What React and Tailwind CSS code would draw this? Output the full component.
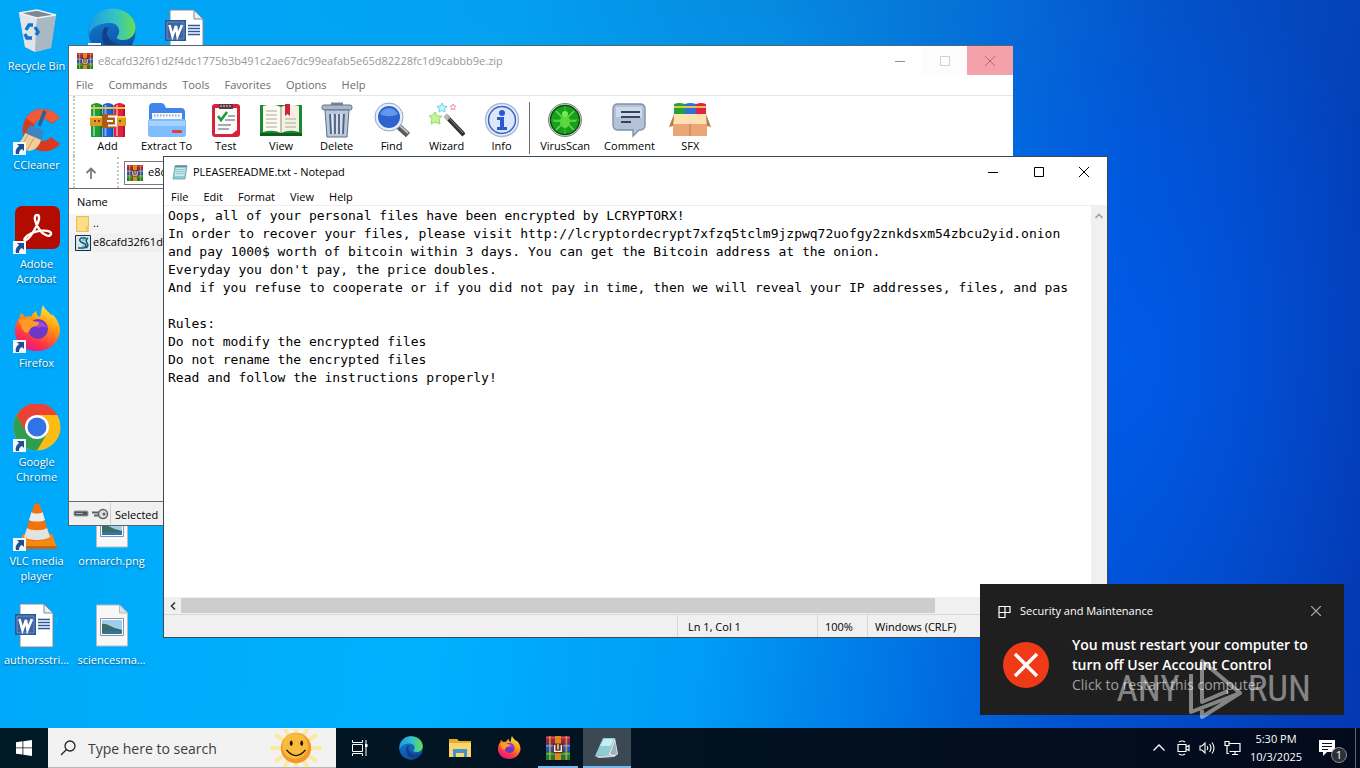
import React, { useState } from "react";

const ARCHIVE =
  "e8cafd32f61d2f4dc1775b3b491c2ae67dc99eafab5e65d82228fc1d9cabbb9e.zip";

const NOTE = `Oops, all of your personal files have been encrypted by LCRYPTORX!
In order to recover your files, please visit http://lcryptordecrypt7xfzq5tclm9jzpwq72uofgy2znkdsxm54zbcu2yid.onion
and pay 1000$ worth of bitcoin within 3 days. You can get the Bitcoin address at the onion.
Everyday you don't pay, the price doubles.
And if you refuse to cooperate or if you did not pay in time, then we will reveal your IP addresses, files, and pas

Rules:
Do not modify the encrypted files
Do not rename the encrypted files
Read and follow the instructions properly!`;

/* ---------- desktop icons ---------- */

const RecycleBin = () => (
  <svg viewBox="0 0 48 48" className="size-12">
    <path d="M6 5 43 7 38 40 22 44 12 39Z" fill="#b9c6cf" />
    <path d="M6 5 24 10 22 44 12 39Z" fill="#dfe5e9" />
    <path d="M24 10 43 7 38 40 22 44Z" fill="#a9b8c2" />
    <path d="M6 5 24 2 43 7 24 10Z" fill="#7d8a92" stroke="#eef2f4" strokeWidth="1.4" />
    <g fill="none" stroke="#1573c8" strokeWidth="3.4">
      <path d="M13 22l3-5h4" />
      <path d="M22 19l3 5-2 3" />
      <path d="M19 30h-5l-2-4" />
    </g>
  </svg>
);

const Edge = ({ className }) => (
  <svg viewBox="0 0 48 48" className={className}>
    <defs>
      <linearGradient id="edgeA" x1="0" y1="0.3" x2="1" y2="0.3">
        <stop offset="0" stopColor="#1b9de2" />
        <stop offset="0.55" stopColor="#35c1c8" />
        <stop offset="1" stopColor="#66dd55" />
      </linearGradient>
      <linearGradient id="edgeB" x1="0" y1="0" x2="0.3" y2="1">
        <stop offset="0" stopColor="#1488d8" />
        <stop offset="1" stopColor="#0c4fa5" />
      </linearGradient>
    </defs>
    <circle cx="24" cy="24" r="23.5" fill="url(#edgeB)" />
    <path d="M1 22C2 9 12 .5 24 .5 38 .5 47.500 10 47.500 20c0 8-6 12-12 12-6 0-8-2-6-4 4-5 1-13-8-13C11 15 2 20 1 28Z" fill="url(#edgeA)" />
    <path d="M17 19c-6 8-2 22 10 26 7 0 14-4 18-10-6 3-14 3-20-1-6-4-8-10-4-14Z" fill="#123f86" />
  </svg>
);

const WordDoc = () => (
  <svg viewBox="0 0 48 48" className="size-12">
    <path d="M7 2h24l9 9v34H7Z" fill="#fff" stroke="#7a8a99" strokeWidth="1" />
    <path d="M31 2v9h9Z" fill="#e8eef4" stroke="#7a8a99" strokeWidth="1" />
    <g stroke="#2b579a" strokeWidth="1.300">
      <path d="M25 17.500h12M25 20.500h12M25 23.500h12M25 26.500h12" />
    </g>
    <path d="M2 12h21v21H2Z" fill="#2b579a" />
    <path d="M4 14h17v17H4Z" fill="#fff" fillOpacity="0.080" stroke="#8fb0de" strokeWidth="0.600" />
    <path d="m6.500 17 3 11 3.500-10 1.500 10L19 17" fill="none" stroke="#fff" strokeWidth="2.600" />
  </svg>
);

const PngDoc = () => (
  <svg viewBox="0 0 48 48" className="size-12">
    <path d="M8.500 3h23l8 8v33h-31Z" fill="#f7f7f7" stroke="#b3bcc2" />
    <path d="M31.500 3v8h8Z" fill="#dbe2e6" stroke="#b3bcc2" />
    <path d="M12.500 16.500h23v17h-23Z" fill="#fff" stroke="#8696a3" />
    <path d="M14 18h20v14H14Z" fill="#9fcdf0" />
    <path d="M14 22c6-1 9 4 20 6v2H14Z" fill="#3d6b62" />
    <path d="M14 29h20v3H14Z" fill="#2d75a8" />
  </svg>
);

const CCleaner = () => (
  <svg viewBox="0 0 48 48" className="size-12">
    <path d="M47 11C38-1 20-1 13 11c-8 14-1 30 15 33 7 1 14-1 19-7l-9-7c-5 6-13 5-16-1-4-9 1-17 8-17 3 0 6 2 8 5Z" fill="#d8391f" />
    <path d="M47 11C38-1 20-1 13 11l8 6c4-6 13-7 17-1Z" fill="#ee5a3a" />
    <path d="M32 4 26 19" stroke="#2c5f94" strokeWidth="3.500" />
    <path d="m17 18 14 6-3 9-16-7Z" fill="#3f82c0" />
    <path d="M12 26 28 33c-2 7-6 10-12 11L1 39c5-2 9-7 11-13Z" fill="#f0cf9a" />
    <path d="m15 28-7 12M21 31l-7 12" stroke="#c89c5e" />
  </svg>
);

const Acrobat = () => (
  <svg viewBox="0 0 48 48" className="size-12">
    <rect x="2" y="0" width="45" height="43" rx="7" fill="#b30b00" />
    <path d="M24 9c-4 0-2 8 2 14 4 6 11 9 12 5 1-5-14-4-21 0-6 3-7 7-4 6 5-2 14-19 13-23 0-1-1-2-2-2Z" fill="none" stroke="#fff" strokeWidth="2.400" />
  </svg>
);

const Firefox = ({ className }) => (
  <svg viewBox="0 0 48 48" className={className}>
    <defs>
      <linearGradient id="ffA" x1="0.8" y1="0" x2="0.3" y2="1">
        <stop offset="0" stopColor="#fff14a" />
        <stop offset="0.4" stopColor="#ff980e" />
        <stop offset="0.75" stopColor="#ff3647" />
        <stop offset="1" stopColor="#e31587" />
      </linearGradient>
    </defs>
    <path d="M30 0c2 5 6 7 9 11 0-1 0-2-1-3 6 5 9 12 9 18-1 12-11 20-23 20S2 38 2 26c0-6 2-11 5-14 0-1 0-2 1-4 2 1 3 3 4 4 2-1 4-1 6 0 1-3 3-5 6-6-1 4 1 5 3 6 1-3 1-8 3-12Z" fill="url(#ffA)" />
    <circle cx="25" cy="24" r="10" fill="#6f37c8" />
    <path d="M17 19c5-5 15-3 17 4-3-2-6-2-8 0Z" fill="#a04be0" />
    <path d="M6 15c5-2 10-2 14 1 2 1 5 0 6 2 0 3-5 3-8 5-2 2-1 4-4 5-3 0-6-5-8-13Z" fill="#ff9a28" />
  </svg>
);

const Chrome = () => (
  <svg viewBox="0 0 48 48" className="size-12">
    <circle cx="24" cy="23" r="23.500" fill="#fbbc16" />
    <g transform="translate(0 -1)">
      <path d="M24 12h20.400A23.500 23.500 0 0 0 3.600 12.300L13 30Z" fill="#ea4335" />
      <path d="M3.600 12.300A23.500 23.500 0 0 0 24 47.500L34.400 30 24 24 13.600 30Z" fill="#2f9e4f" />
      <circle cx="24" cy="24" r="12" fill="#fff" />
      <circle cx="24" cy="24" r="9.500" fill="#2f73e6" />
    </g>
  </svg>
);

const Vlc = () => (
  <svg viewBox="0 0 48 48" className="size-12">
    <path d="M10 31h29l5 14H4Z" fill="#f58a12" />
    <path d="M4 43h40v3H4Z" fill="#c8650a" />
    <path d="M21 2c1-2 5-2 6 0l10 33c-3 4-23 4-26 0Z" fill="#f3730a" />
    <path d="m18.500 9-2.500 8c3 2 13 2 16 0l-2.500-8c-2 2-9 2-11 0Z" fill="#ececec" />
    <path d="m14 25-3 9c4 4 22 4 26 0l-3-9c-4 3-16 3-20 0Z" fill="#e2e2e2" />
  </svg>
);

const ShortcutArrow = () => (
  <svg viewBox="0 0 13 13" className="absolute bottom-0 left-0 size-[13px]">
    <path d="M0 0h13v13H0Z" fill="#f4f8fb" />
    <path d="M4 2h7v7L9 7C7 8 6 9 6 12H3C2 8 4 6 6 4Z" fill="#1d4f91" />
  </svg>
);

/* ---------- archive icons ---------- */

const RarBooks = ({ className }) => (
  <svg viewBox="0 0 16 16" className={className}>
    <path d="M0 0h16v5.200H0Z" fill="#a3203f" />
    <path d="M0 5.200h16v5.300H0Z" fill="#2c4fc0" />
    <path d="M0 10.500h16V16H0Z" fill="#1f7a34" />
    <path d="M0 .8h16v.8H0Z" fill="#d95a70" />
    <path d="M0 6.200h16v.8H0Z" fill="#6fa8ee" />
    <path d="M0 11.500h16v.8H0Z" fill="#5fc45a" />
    <path d="M2 0h1.200v16H2Zm11 0h1.200v16H13Z" fill="#d9b43c" fillOpacity="0.700" />
    <path d="M6 0h4v16H6Z" fill="#d98a1a" />
    <path d="M4.500 5h7v6.500h-7Z" fill="#6b2d16" />
    <path d="M5.800 6v4.200h4.400V6M8 5.500V9" fill="none" stroke="#f4f4f4" strokeWidth="0.900" />
  </svg>
);

const AddIcon = () => (
  <svg viewBox="0 0 36 36" className="size-9">
    {["#1d9c3c", "#1d63d8", "#e0203e"].map((color, i) => (
      <g key={color} transform={`translate(${1 + i * 11.5} 1)`}>
        <path d="M0 2q5.500-4 11 0v32H0Z" fill={color} />
        <path d="M2 2h2v31H2Z" fill="#fff" fillOpacity="0.450" />
        <path d="M9 2h2v32H9Z" fill="#000" fillOpacity="0.220" />
        <path d="M0 4h11v2H0Z" fill="#f0c23a" />
      </g>
    ))}
    <path d="M0 14h36v10H0Z" fill="#e09a1e" />
    <path d="M0 14h36v2H0Z" fill="#f8cf62" />
    <path d="M12 12h14v14H12Z" fill="#a85c18" />
    <path d="M18 14.500h8v9h-8M17 19h6" fill="none" stroke="#f5f5f5" strokeWidth="2.200" />
    <path d="M4 19h2M8 19h2M29 19h2" stroke="#7a4210" strokeWidth="2" />
  </svg>
);

const ExtractIcon = () => (
  <svg viewBox="0 0 38 36" className="h-9 w-[38px]">
    <path d="M1 5q0-4 4-4h8q3 0 4 3l1 2h15q4 0 4 4v20q0 4-4 4H5q-4 0-4-4Z" fill="#3f85ea" />
    <path d="M4 11h30v12H4Z" fill="#f5f8fb" />
    <path d="M6 13.500h26" stroke="#9bacc0" strokeWidth="2" strokeDasharray="1.500 1.500" />
    <path d="M0 20q0-3 3-3h32q3 0 3 3v12q0 3-3 3H3q-3 0-3-3Z" fill="#7ebcfb" />
    <path d="M1 19h36v5H1Z" fill="#a6d3ff" />
    <rect x="24" y="28" width="10" height="3" rx="1" fill="#e0403a" />
  </svg>
);

const TestIcon = () => (
  <svg viewBox="0 0 30 36" className="h-9 w-[30px]">
    <rect x="1" y="2" width="28" height="33" rx="3" fill="#d62338" />
    <path d="M4 6h22v22l-5 4H4Z" fill="#fbfbfb" />
    <path d="M8 2h14v5H8Z" fill="#5d3a40" />
    <path d="M9 4h12" stroke="#f1d5d5" strokeDasharray="2 1" />
    <path d="m7 14 3 4 6-8" fill="none" stroke="#1f9a3c" strokeWidth="2.600" />
    <path d="M17 14h7M14 18h10M7 23h13M7 27h11" stroke="#8a8f96" strokeWidth="1.400" />
  </svg>
);

const ViewIcon = () => (
  <svg viewBox="0 0 44 36" className="h-9 w-11">
    <path d="M1 3h42v30H1Z" fill="#1a8a33" />
    <path d="M1 31h42v3H1Z" fill="#0d5f20" />
    <path d="M4 4q10-3 18 1v26q-8-4-18-1Z" fill="#fdfbf2" />
    <path d="M40 4q-10-3-18 1v26q8-4 18-1Z" fill="#f4f0e3" />
    <path d="M22 5v26" stroke="#8f8a78" />
    <path d="M7 9h11M7 13h11M7 17h11M7 21h11M7 25h11M26 17h11M26 21h11M26 25h11" stroke="#a9a99b" />
    <path d="M26 2h5v12l-2.500-2-2.500 2Z" fill="#cf2335" />
  </svg>
);

const DeleteIcon = () => (
  <svg viewBox="0 0 32 36" className="h-9 w-8">
    <path d="M10 2h12" stroke="#78869a" strokeWidth="3" />
    <rect x="1" y="3" width="30" height="5" rx="2" fill="#a9b7c9" stroke="#65748a" />
    <path d="M4 8h24l-2 27H6Z" fill="#b9c8da" stroke="#5f7089" />
    <path d="m9 12 1 20M14 12v20M18 12v20M23 12l-1 20" stroke="#4f6280" strokeWidth="1.800" />
    <path d="m11 12 1 20M16 12v20M20 12v20" stroke="#eef4fa" strokeWidth="1" />
  </svg>
);

const FindIcon = () => (
  <svg viewBox="0 0 36 36" className="size-9">
    <path d="m24 24 10 9" stroke="#5a5a5e" strokeWidth="6" />
    <path d="m25 23 9 8" stroke="#b9bdc4" strokeWidth="2" />
    <circle cx="15" cy="15" r="14" fill="#e7eef8" stroke="#8ea6cf" />
    <circle cx="15" cy="15" r="11" fill="#2d62cf" />
    <path d="M6 12c4-8 14-8 18 0-5 3-13 3-18 0Z" fill="#6596ee" />
  </svg>
);

const WizardIcon = () => (
  <svg viewBox="0 0 36 36" className="size-9">
    <path d="m17 14 18 19" stroke="#2f2f33" strokeWidth="4.500" />
    <path d="m16 13 4 4" stroke="#b9b9bd" strokeWidth="4.500" />
    <path d="m19 15 15 16" stroke="#8b8b90" strokeWidth="1" />
    <path d="m6 10 2 4 5 0-3 3 1 5-5-2-4 2 1-5-3-3 4-1Z" fill="#c9f396" stroke="#8fdc66" />
    <path d="m13 1 1.500 3 3.500.5-2.500 2.500.5 3-3-1.500-3 1.500.5-3L8 4.500l3.500-.5Z" fill="#c4f4fb" stroke="#6cd3e8" />
    <path d="m24 2 1 2 2 .2-1.500 1.500.5 2-2-1-2 1 .5-2L21 4.200l2-.2Z" fill="#fff" stroke="#f3909c" />
  </svg>
);

const InfoIcon = () => (
  <svg viewBox="0 0 36 36" className="size-9">
    <circle cx="18" cy="18" r="16.500" fill="#e9f0fb" stroke="#a9b9d6" strokeWidth="1.500" />
    <circle cx="18" cy="18" r="13.500" fill="#dce7fa" stroke="#3865c4" strokeWidth="1.500" />
    <circle cx="18" cy="11" r="3" fill="#2b57d0" />
    <path d="M13 15h7v10h3v3H13v-3h3v-7h-3Z" fill="#2b57d0" />
  </svg>
);

const VirusIcon = () => (
  <svg viewBox="0 0 36 36" className="size-9">
    <circle cx="18" cy="18" r="16.500" fill="#d3dad3" stroke="#7b857b" />
    <circle cx="18" cy="18" r="14.500" fill="#18a01c" stroke="#0b4d10" strokeWidth="1.500" />
    <path d="M18 4v28M4 18h28" stroke="#3fc43a" />
    <path d="m9 9 6 6m12-6-6 6M7 19h6m16 0h-6M9 28l6-6m12 6-6-6" stroke="#62dc4c" strokeWidth="1.600" />
    <ellipse cx="18" cy="19.500" rx="5" ry="6.500" fill="#5ad83e" />
    <circle cx="18" cy="12" r="3" fill="#7ae858" />
  </svg>
);

const CommentIcon = () => (
  <svg viewBox="0 0 36 36" className="size-9">
    <path d="M7 2h22q5 0 5 5v16q0 5-5 5h-1l-6 6 0-6H7q-5 0-5-5V7q0-5 5-5Z" fill="#b3c2d8" stroke="#8190ab" strokeWidth="1.400" />
    <path d="M5 5h26v10H5Z" fill="#dae4f1" fillOpacity="0.700" />
    <path d="M10 10h19M10 15h19M10 20h10" stroke="#35455f" strokeWidth="1.800" />
  </svg>
);

const SfxIcon = () => (
  <svg viewBox="0 0 42 36" className="h-9 w-[42px]">
    <path d="M5 2q5-2 11 0v13H5Z" fill="#22a13c" />
    <path d="M16 2q5-2 11 0v13H16Z" fill="#2f6fd8" />
    <path d="M27 2q5-2 10 0v13H27Z" fill="#e02343" />
    <path d="M5 4h32v2H5Z" fill="#eac24a" />
    <path d="M5 12h32l4 11H1Z" fill="#c58a5c" />
    <path d="M5 12h32l1 10H4Z" fill="#fbe2b0" />
    <path d="M4 22h34v12H4Z" fill="#eca676" />
    <path d="M21 22v12" stroke="#c07a4a" />
    <path d="m5 13-5 12 4-1ZM37 13l5 12-4-1Z" fill="#b07c52" />
  </svg>
);

/* ---------- small icons ---------- */

const NotepadIcon = () => (
  <svg viewBox="0 0 16 16" className="size-4">
    <path d="M3 2h12l-2 13H1Z" fill="#8ccbd3" stroke="#5f9aa5" strokeWidth="0.700" />
    <path d="M4 4h9.500l-1.300 8H2.500Z" fill="#c5ebee" />
    <path d="M4 5.500h9M4 7.500h8.500M3.500 9.500h9" stroke="#7db9c4" strokeWidth="0.700" />
    <path d="M4 1v2M6 1v2M8 1v2M10 1v2M12 1v2M14 1v2" stroke="#4d5c61" strokeWidth="0.900" />
  </svg>
);

const NotepadTile = () => (
  <svg viewBox="0 0 24 24" className="size-6">
    <path d="M8 2h12L13 19 0 20Z" fill="#8fcdd6" />
    <path d="M9 3h10l-3 7H5Z" fill="#c6edf0" />
    <path d="m20 2 3 16-4 3-6-2Z" fill="#e2ecee" />
    <path d="m20 5 2 13-3 1-4-1Z" fill="#9fb4ba" />
    <path d="m0 20 13-1 6 2-15 1Z" fill="#cfd9da" />
  </svg>
);

const FolderTile = () => (
  <svg viewBox="0 0 24 24" className="size-6">
    <path d="M1 3h8l2 2h12v16H1Z" fill="#e8a92c" />
    <path d="M1 7h22v14H1Z" fill="#fbd66a" />
    <path d="M5 13h14v8h-3v-4H8v4H5Z" fill="#3f93d6" />
  </svg>
);

const Sun = () => (
  <svg viewBox="0 0 60 40" className="mr-2.5 ml-auto h-[38px] w-[60px] shrink-0">
    <g stroke="#fbe9a0" strokeWidth="4">
      <path d="M30 20V0M30 20v20M30 20H3M30 20h27M30 20 8 6M30 20 52 6M30 20 8 34M30 20l22 14M30 20 17-2M30 20 43-2M30 20 17 42M30 20l13 22" />
    </g>
    <circle cx="30" cy="20" r="16" fill="#f0982a" />
    <circle cx="29" cy="18" r="13.500" fill="#f8bb3e" />
    <ellipse cx="25" cy="15" rx="1.500" ry="3" fill="#1d1208" />
    <ellipse cx="36" cy="15" rx="1.500" ry="3" fill="#1d1208" />
    <path d="M20 22q10 12 20 0" fill="none" stroke="#1d1208" strokeWidth="1.500" />
  </svg>
);

const WinButtons = ({ faded }) => (
  <div className="ml-auto flex h-[29px]">
    <button aria-label="Minimize" className={faded ? "w-[45px] text-[#8c8c8c]" : "w-[46px]"}>
      <svg viewBox="0 0 10 10" className="mx-auto size-2.5">
        <path d="M0 5.500h10" stroke="currentColor" />
      </svg>
    </button>
    <button aria-label="Maximize" className={faded ? "w-[45px] bg-[#fcfcfc] text-[#cfcfcf]" : "w-[45px]"}>
      <svg viewBox="0 0 10 10" className="mx-auto size-2.5">
        <path d="M.5.500h9v9h-9Z" fill="none" stroke="currentColor" />
      </svg>
    </button>
    <button aria-label="Close" className={faded ? "w-[46px] bg-[#f4a1a9] text-[#a37278]" : "w-[46px]"}>
      <svg viewBox="0 0 10 10" className="mx-auto size-2.5">
        <path d="m0 0 10 10M10 0 0 10" stroke="currentColor" />
      </svg>
    </button>
  </div>
);

const desktopItems = [
  { label: "Recycle Bin", icon: <RecycleBin />, cell: "col-start-1 row-start-1" },
  { label: "CCleaner", icon: <CCleaner />, cell: "col-start-1 row-start-2", link: true },
  { label: "Adobe Acrobat", icon: <Acrobat />, cell: "col-start-1 row-start-3", link: true },
  { label: "Firefox", icon: <Firefox className="size-12" />, cell: "col-start-1 row-start-4", link: true },
  { label: "Google Chrome", icon: <Chrome />, cell: "col-start-1 row-start-5", link: true },
  { label: "VLC media player", icon: <Vlc />, cell: "col-start-1 row-start-6", link: true },
  { label: "authorsstri...", icon: <WordDoc />, cell: "col-start-1 row-start-7" },
  { label: "", icon: <Edge className="size-12" />, cell: "col-start-2 row-start-1", link: true },
  { label: "ormarch.png", icon: <PngDoc />, cell: "col-start-2 row-start-6" },
  { label: "sciencesma...", icon: <PngDoc />, cell: "col-start-2 row-start-7" },
  { label: "", icon: <WordDoc />, cell: "col-start-3 row-start-1" },
];

const tools = [
  { label: "Add", icon: <AddIcon /> },
  { label: "Extract To", icon: <ExtractIcon /> },
  { label: "Test", icon: <TestIcon /> },
  { label: "View", icon: <ViewIcon /> },
  { label: "Delete", icon: <DeleteIcon /> },
  { label: "Find", icon: <FindIcon /> },
  { label: "Wizard", icon: <WizardIcon /> },
  { label: "Info", icon: <InfoIcon /> },
];

const extraTools = [
  { label: "VirusScan", icon: <VirusIcon /> },
  { label: "Comment", icon: <CommentIcon /> },
  { label: "SFX", icon: <SfxIcon /> },
];

const ToolButton = ({ tool }) => (
  <button className="flex min-w-[55px] flex-col items-center px-1.5">
    {tool.icon}
    <span className="leading-4">{tool.label}</span>
  </button>
);

const Desktop = () => (
  <div className="grid grid-cols-[repeat(3,75px)] grid-rows-[repeat(7,99px)]">
    {desktopItems.map((item, index) => (
      <div key={index} className={`flex flex-col items-center pt-2 pr-0.5 ${item.cell}`}>
        <div className="relative">
          {item.icon}
          {item.link && <ShortcutArrow />}
        </div>
        <span className="mt-0.5 text-center leading-[15px] text-white [text-shadow:0_1px_2px_rgba(0,0,0,0.55)]">
          {item.label}
        </span>
      </div>
    ))}
  </div>
);

const WinRar = () => (
  <section className="absolute top-[45px] left-[68px] flex h-[481px] w-[945px] flex-col border border-r-0 border-[#4f6675] bg-white">
    <header className="flex h-[29px] shrink-0 items-center pl-2 text-[#999999]">
      <RarBooks className="size-4" />
      <span className="ml-[5px] pt-px">{ARCHIVE}</span>
      <WinButtons faded />
    </header>
    <nav className="flex h-[21px] shrink-0 items-center gap-[15px] border-b border-[#e6e6e6] pt-px pl-[7px] text-[#6d6d6d]">
      <button>File</button>
      <button>Commands</button>
      <button>Tools</button>
      <button>Favorites</button>
      <button>Options</button>
      <button>Help</button>
    </nav>
    <div className="ml-1 flex shrink-0 border-l-2 border-dotted border-[#c4c4c4] pt-1.5 pb-0.5 pl-[5px]">
      <div className="flex">
        {tools.map((tool) => (
          <ToolButton key={tool.label} tool={tool} />
        ))}
      </div>
      <div className="mr-1 w-px bg-[#6b6b6b]" />
      <div className="flex gap-0.5">
        {extraTools.map((tool) => (
          <ToolButton key={tool.label} tool={tool} />
        ))}
      </div>
    </div>
    <div className="ml-1 flex h-8 shrink-0 items-center border-l-2 border-dotted border-[#c4c4c4] pt-px">
      <button aria-label="Up one level" className="flex w-8 justify-center">
        <svg viewBox="0 0 12 12" className="size-3 text-[#7a7a7a]">
          <path d="M6 12V1.500M1.500 6 6 1.500 10.500 6" fill="none" stroke="currentColor" strokeWidth="1.800" />
        </svg>
      </button>
      <div className="ml-2.5 h-full border-l-2 border-dotted border-[#c4c4c4]" />
      <label className="mr-2 ml-[5px] flex h-6 grow items-center border border-[#7a7a7a] pl-0.5">
        <RarBooks className="size-4" />
        <input aria-label="Address" className="ml-[5px] grow outline-none" defaultValue={ARCHIVE} />
      </label>
    </div>
    <div className="grow border-t border-[#6b6b6b] bg-[#f5f5f5]">
      <table className="w-full text-left">
        <thead className="bg-white">
          <tr>
            <th className="h-[25px] pt-0.5 pl-2 font-normal">Name</th>
          </tr>
        </thead>
        <tbody>
          <tr>
            <td className="h-[19px] pl-1.5">
              <span className="flex items-center">
                <svg viewBox="0 0 16 16" className="size-4">
                  <path d="M1.500.500h12v15h-12Z" fill="#fbdd84" stroke="#e5bd52" />
                  <path d="M11 10h3v5h-3Z" fill="#f2c85c" />
                </svg>
                <span className="ml-0.5">..</span>
              </span>
            </td>
          </tr>
          <tr className="bg-[#f0f0f0]">
            <td className="h-[19px] pl-1.5">
              <span className="flex items-center">
                <svg viewBox="0 0 16 16" className="size-4">
                  <path d="M.5.500h15v15H.5Z" fill="#d7e4ea" stroke="#14324a" />
                  <path d="M11 3H6Q3.500 5 6 7l4 2q2 2-1 4H3M13 3q-3 2-1 5 2 3-1 5" fill="none" stroke="#0f5b75" strokeWidth="1.600" />
                  <path d="M7 5h4M7 11h2" stroke="#2fa8b8" strokeWidth="1.200" />
                </svg>
                <span className="ml-0.5">e8cafd32f61d2f4dc</span>
              </span>
            </td>
          </tr>
        </tbody>
      </table>
    </div>
    <footer className="flex h-6 shrink-0 items-center border-t border-[#6b6b6b] bg-[#f0f0f0]">
      <svg viewBox="0 0 36 12" className="ml-1 h-3 w-9 shrink-0">
        <rect x="1" y="3" width="14" height="5" rx="1" fill="#4d565c" stroke="#9aa3a8" />
        <path d="M3 5.500h7" stroke="#aab4b9" />
        <path d="M19 4.500h8M21 7.500h6" stroke="#5d6468" strokeWidth="2" />
        <circle cx="30" cy="6" r="4.500" fill="#dcdfe0" stroke="#5d6468" strokeWidth="1.500" />
        <circle cx="31" cy="6" r="1.500" fill="#5d6468" />
      </svg>
      <span className="ml-px border-l border-[#d0d0d0] pt-1 pl-1">Selected</span>
    </footer>
  </section>
);

const Notepad = () => {
  const [text, setText] = useState(NOTE);
  return (
    <section className="absolute top-[156px] left-[163px] flex h-[482px] w-[945px] flex-col border border-[#3c4a54] bg-white text-black">
      <header className="flex h-[30px] shrink-0 items-center pl-2">
        <NotepadIcon />
        <span className="ml-[5px]">PLEASEREADME.txt - Notepad</span>
        <WinButtons />
      </header>
      <nav className="flex h-[19px] shrink-0 items-center gap-[15px] border-b border-[#ededed] pt-0.5 pl-[7px]">
        <button>File</button>
        <button>Edit</button>
        <button>Format</button>
        <button>View</button>
        <button>Help</button>
      </nav>
      <div className="flex grow">
        <textarea
          aria-label="Text editor"
          wrap="off"
          spellCheck={false}
          value={text}
          onChange={(e) => setText(e.target.value)}
          className="grow resize-none overflow-hidden pt-px pl-1 font-['DejaVu_Sans_Mono',monospace] text-[13px] leading-[18px] outline-none"
        />
        <div className="flex w-4 flex-col items-center bg-[#f0f0f0] pt-[7px]">
          <svg viewBox="0 0 8 6" className="h-1.5 w-2">
            <path d="m.5 5 3.500-3.500L7.500 5" fill="none" stroke="#a3a3a3" strokeWidth="1.700" />
          </svg>
        </div>
      </div>
      <div className="flex h-[17px] shrink-0 items-center bg-[#f0f0f0]">
        <div className="flex w-[17px] justify-center">
          <svg viewBox="0 0 6 8" className="h-2 w-1.5">
            <path d="M5 .5 1.500 4 5 7.500" fill="none" stroke="#404040" strokeWidth="1.700" />
          </svg>
        </div>
        <div className="h-[15px] w-4/5 bg-[#cdcdcd]" />
      </div>
      <footer className="flex h-[23px] shrink-0 items-center justify-end border-t border-[#d7d7d7] bg-[#f0f0f0]">
        <span className="w-[140px] border-l border-[#d7d7d7] pt-px pl-2.5 leading-[21px]">Ln 1, Col 1</span>
        <span className="w-[50px] border-l border-[#d7d7d7] pt-px pl-[7px] leading-[21px]">100%</span>
        <span className="w-60 border-l border-[#d7d7d7] pt-px pl-[7px] leading-[21px]">Windows (CRLF)</span>
      </footer>
    </section>
  );
};

const Toast = () => (
  <aside className="absolute right-4 bottom-[13px] w-[364px] bg-[#1f1f1f] pt-[18px] pr-[23px] pb-5 pl-[18px] text-white">
    <div className="flex items-center">
      <svg viewBox="0 0 13 13" className="size-[13px]">
        <path d="M1 1.500h11v6H7v5H1ZM1 7.500h6M7 1v7" fill="none" stroke="#fff" strokeWidth="1.200" />
      </svg>
      <span className="ml-[9px] leading-[18px]">Security and Maintenance</span>
      <button aria-label="Dismiss" className="ml-auto">
        <svg viewBox="0 0 10 10" className="size-2.5">
          <path d="m0 0 10 10M10 0 0 10" stroke="#b0b0b0" strokeWidth="1.200" />
        </svg>
      </button>
    </div>
    <div className="mt-[15px] flex">
      <svg viewBox="0 0 46 46" className="mt-[7px] ml-[5px] size-[46px] shrink-0">
        <circle cx="23" cy="23" r="23" fill="#f03a17" />
        <path d="m12 12 22 22M34 12 12 34" stroke="#fff" strokeWidth="3.500" />
      </svg>
      <div className="ml-[23px] text-sm leading-5">
        <p className="font-semibold">
          You must restart your computer to
          <br />
          turn off User Account Control
        </p>
        <p className="text-[#a0a0a0]">Click to restart this computer</p>
      </div>
    </div>
  </aside>
);

const Watermark = () => (
  <div className="pointer-events-none absolute right-[49px] bottom-2 flex items-center font-['Liberation_Sans_Narrow','Roboto_Condensed','Roboto',sans-serif] text-[37px] leading-[62px] text-white opacity-45">
    <span>ANY</span>
    <svg viewBox="0 0 56 62" className="mr-1 ml-2 h-[62px] w-14">
      <path
        d="M3 16v38L52 35 14 3v41L40 33M14 52v7L52 35"
        fill="none"
        stroke="#fff"
        strokeWidth="4"
        strokeLinejoin="round"
      />
    </svg>
    <span>RUN</span>
  </div>
);

const Taskbar = () => (
  <footer className="flex h-10 shrink-0 bg-linear-to-r from-[#001a26] to-[#030a1c] text-white">
    <button aria-label="Start" className="flex w-12 items-center justify-center">
      <svg viewBox="0 0 16 16" className="size-4" fill="#fff">
        <path d="M0 2.200 6.500 1.300v6.200H0ZM7.300 1.200 16 0v7.500H7.300ZM0 8.300h6.500v6.300L0 13.700ZM7.300 8.300H16V16l-8.700-1.200Z" />
      </svg>
    </button>
    <label className="flex w-72 items-center border-b border-[#b8b8b8] bg-[#f2f2f2] pl-3">
      <svg viewBox="0 0 16 16" className="size-4 shrink-0">
        <path d="M6.500 9.500 1 15" stroke="#222" strokeWidth="1.300" />
        <circle cx="10" cy="6" r="5" fill="none" stroke="#222" strokeWidth="1.300" />
      </svg>
      <input
        aria-label="Search"
        placeholder="Type here to search"
        className="ml-3 w-[152px] pt-0.5 text-sm outline-none placeholder:text-[#3d3d3d]"
      />
      <Sun />
    </label>
    <div className="flex gap-px">
      <button aria-label="Task View" className="mr-0.5 flex w-12 items-center justify-center">
        <svg viewBox="0 0 16 16" className="size-4">
          <path d="M.5 4.500h10v7H.5ZM.5 0v2.500h10V0M.5 16v-2.500h10V16M14 0v16" fill="none" stroke="#fff" strokeWidth="1" />
          <path d="M13 4h2.500v3H13Z" fill="#fff" />
        </svg>
      </button>
      <button aria-label="Edge" className="flex w-12 items-center justify-center">
        <Edge className="size-6" />
      </button>
      <button aria-label="File Explorer" className="flex w-12 items-center justify-center">
        <FolderTile />
      </button>
      <button aria-label="Firefox" className="flex w-12 items-center justify-center">
        <Firefox className="size-6" />
      </button>
      <button aria-label="WinRAR" className="relative flex w-12 items-center justify-center">
        <RarBooks className="size-6" />
        <span className="absolute inset-x-1 bottom-0 h-0.5 bg-[#76b9ed]" />
      </button>
      <button aria-label="Notepad" className="relative flex w-12 items-center justify-center bg-[#3a4953]">
        <NotepadTile />
        <span className="absolute inset-x-0 bottom-0 h-0.5 bg-[#76b9ed]" />
      </button>
    </div>
    <div className="ml-auto flex items-center gap-2">
      <svg viewBox="0 0 16 16" className="size-4" fill="none" stroke="#fff" strokeWidth="1.300">
        <path d="m2.500 10.500 5.500-5.500 5.500 5.500" />
      </svg>
      <svg viewBox="0 0 16 16" className="size-4" fill="none" stroke="#fff" strokeWidth="1.200">
        <path d="M3 4.500h8v7H3ZM11 7l3-1.500v5L11 9M4 2q3-2 6 0M4 14q3 2 6 0" />
      </svg>
      <svg viewBox="0 0 17 16" className="h-4 w-[17px]" fill="none" stroke="#fff" strokeWidth="1.100">
        <path d="M1 6h2l3-3v10l-3-3H1ZM8 6q1.500 2 0 4M10.500 4q3 4 0 8M13 2.500q4 5.500 0 11" />
      </svg>
      <svg viewBox="0 0 17 16" className="h-4 w-[17px]" fill="none" stroke="#fff" strokeWidth="1.200">
        <path d="M5 3.500h11v8H5.500M8 14.500h6M11 11.500v3M1 1.500h4v4H1ZM3 5.500v8h2" />
      </svg>
      <div className="w-[54px] text-center leading-[18px]">
        <div>5:30 PM</div>
        <div>10/3/2025</div>
      </div>
      <button aria-label="Notifications" className="relative ml-1 flex w-8 justify-center">
        <svg viewBox="0 0 18 18" className="-ml-2 h-[18px] w-[18px]">
          <path d="M1 1h16v12H9l-4 4v-4H1Z" fill="#fff" />
          <path d="M4 4.500h10M4 7.500h10M4 10.500h6" stroke="#05101f" strokeWidth="1.200" />
        </svg>
        <span className="absolute top-2 right-0 flex size-4 items-center justify-center rounded-full border border-[#8c8c8c] bg-[#2b3038]">
          1
        </span>
      </button>
      <div className="h-10 w-[5px] border-l border-[#5b6572]" />
    </div>
  </footer>
);

const App = () => {
  return (
    <div className="flex h-screen flex-col overflow-hidden font-['Open_Sans','Noto_Sans',sans-serif] text-[11px]">
      <main className="relative grow bg-[radial-gradient(ellipse_20%_60%_at_83%_50%,rgba(0,100,255,0.55),transparent),radial-gradient(ellipse_60%_30%_at_60%_0%,rgba(20,90,170,0.3),transparent),linear-gradient(97deg,#00a8fa_0%,#00b0ff_35%,#009cf5_54%,#0074e4_68%,#0050cc_80%,#0438b2_100%)]">
        <Desktop />
        <WinRar />
        <Notepad />
        <Toast />
        <Watermark />
      </main>
      <Taskbar />
    </div>
  );
};

export default App;
